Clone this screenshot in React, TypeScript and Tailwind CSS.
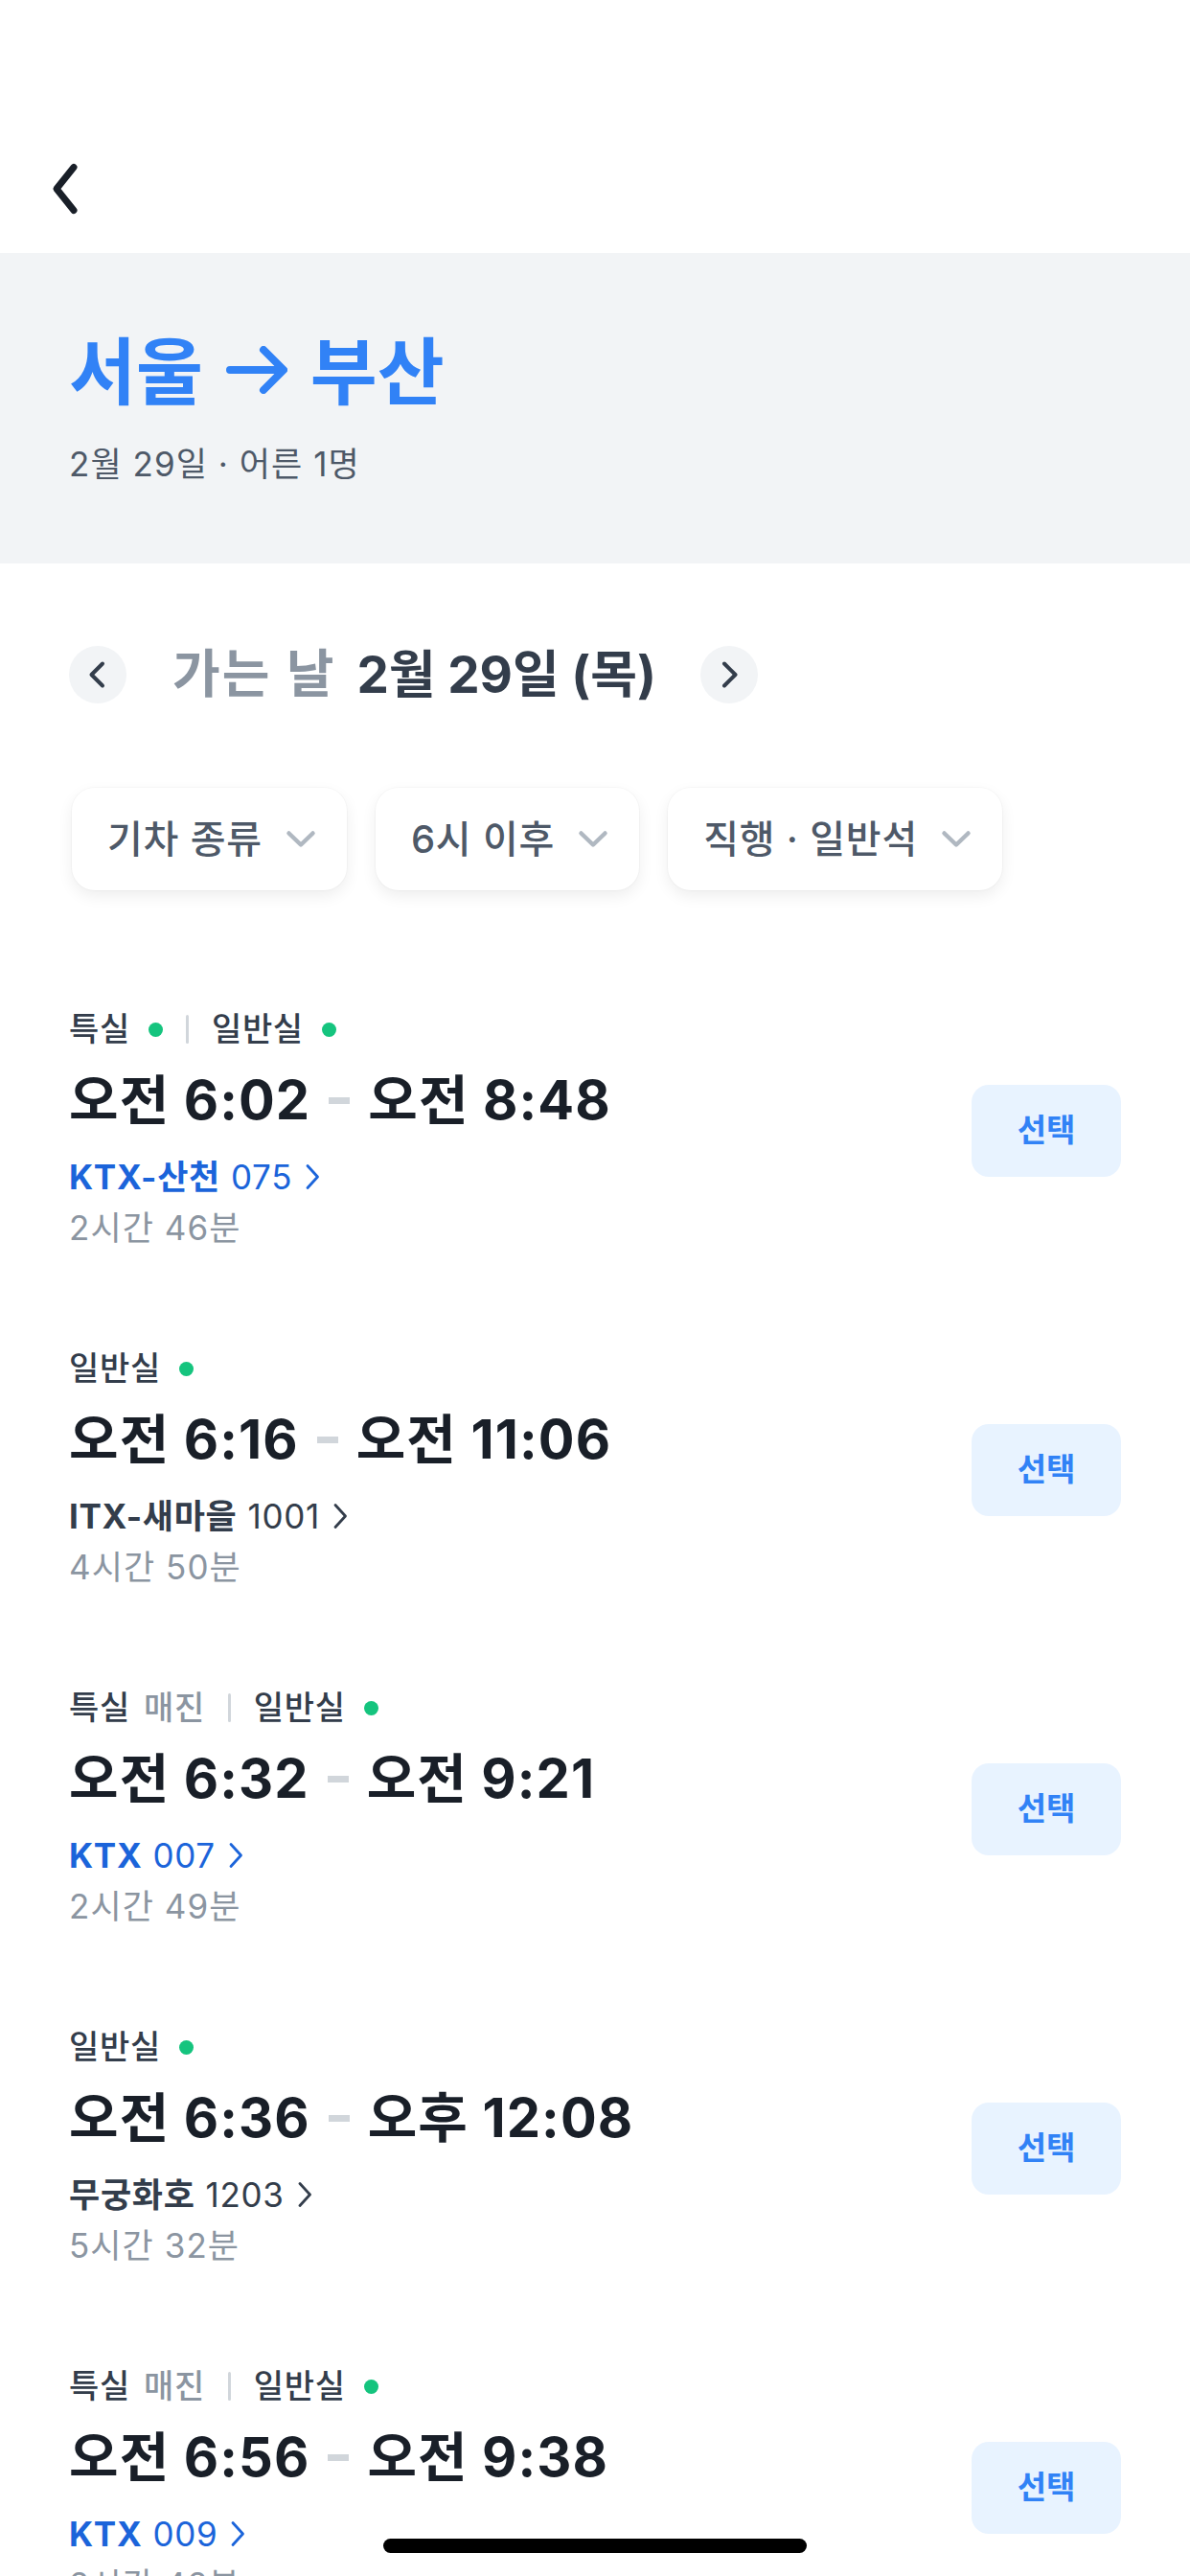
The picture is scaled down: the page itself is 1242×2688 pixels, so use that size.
import React from "react";

type Seat = { name: string; soldOut?: boolean };

type Train = {
  seats: Seat[];
  dep: string;
  arr: string;
  kind: string;
  no: string;
  ktx: boolean;
  duration: string;
};

const trains: Train[] = [
  { seats: [{ name: "특실" }, { name: "일반실" }], dep: "오전 6:02", arr: "오전 8:48", kind: "KTX-산천", no: "075", ktx: true, duration: "2시간 46분" },
  { seats: [{ name: "일반실" }], dep: "오전 6:16", arr: "오전 11:06", kind: "ITX-새마을", no: "1001", ktx: false, duration: "4시간 50분" },
  { seats: [{ name: "특실", soldOut: true }, { name: "일반실" }], dep: "오전 6:32", arr: "오전 9:21", kind: "KTX", no: "007", ktx: true, duration: "2시간 49분" },
  { seats: [{ name: "일반실" }], dep: "오전 6:36", arr: "오후 12:08", kind: "무궁화호", no: "1203", ktx: false, duration: "5시간 32분" },
  { seats: [{ name: "특실", soldOut: true }, { name: "일반실" }], dep: "오전 6:56", arr: "오전 9:38", kind: "KTX", no: "009", ktx: true, duration: "2시간 42분" },
];

const filters = ["기차 종류", "6시 이후", "직행 · 일반석"];

const ChipChevron = () => (
  <svg width="32" height="20" viewBox="0 0 32 20" fill="none">
    <path d="M3.5 3.5 L16 15.5 L28.5 3.5" stroke="#b0b8c1" strokeWidth="4.5" strokeLinecap="round" strokeLinejoin="round" />
  </svg>
);

const SmallChevron = ({ color }: { color: string }) => (
  <svg width="18" height="28" viewBox="0 0 18 28" fill="none">
    <path d="M4 2.5 L14.5 14 L4 25.5" stroke={color} strokeWidth="2.8" strokeLinecap="round" strokeLinejoin="round" />
  </svg>
);

const SeatLabels = ({ seats }: { seats: Seat[] }) => (
  <div className="flex items-center h-[44px] text-[34px] leading-[44px] tracking-[0.02em] text-[#333d4b] font-medium">
    {seats.map((seat, i) => (
      <React.Fragment key={seat.name}>
        {i > 0 && <span className="mx-[24px] w-[3px] h-[30px] bg-[#d1d6db] rounded-full" />}
        <span>{seat.name}</span>
        {seat.soldOut ? (
          <span className="ml-[14px] text-[#8b95a1]">매진</span>
        ) : (
          <span className="ml-[19px] w-[15px] h-[15px] rounded-full bg-[#15c47e]" />
        )}
      </React.Fragment>
    ))}
  </div>
);

const TrainRow = ({ train }: { train: Train }) => {
  const color = train.ktx ? "#1b64da" : "#333d4b";
  return (
    <div className="flex items-center justify-between">
      <div className="flex flex-col">
        <SeatLabels seats={train.seats} />
        <div className="mt-[16px] flex items-center h-[72px] text-[56px] leading-[72px] font-bold text-[#191f28] tracking-[0.02em]">
          <span>{train.dep}</span>
          <span className="mx-[19px] w-[22px] h-[7px] bg-[#d1d6db]" />
          <span>{train.arr}</span>
        </div>
        <div className={`mt-[18px] flex items-center h-[52px] text-[35px] leading-[52px] tracking-[0.02em] ${train.ktx ? "text-[#1b64da]" : "text-[#333d4b]"}`}>
          <span className="font-bold">{train.kind}</span>
          <span className="ml-[11px]">{train.no}</span>
          <span className="ml-[12px] flex items-center">
            <SmallChevron color={color} />
          </span>
        </div>
        <div className="h-[54px] text-[35px] leading-[54px] tracking-[0.03em] text-[#8b95a1]">{train.duration}</div>
      </div>
      <button className="w-[156px] h-[96px] rounded-[18px] bg-[#e8f3ff] text-[#3182f6] text-[33px] font-bold">
        선택
      </button>
    </div>
  );
};

export default function App() {
  return (
    <div className="relative w-[1242px] h-[2688px] overflow-hidden bg-white font-['Inter','Noto_Sans_CJK_KR',sans-serif]">
      {/* Top bar */}
      <div className="h-[264px] pl-[52px] pt-[168px]">
        <svg width="32" height="58" viewBox="0 0 32 58" fill="none">
          <path d="M25 6.5 L7 29 L25 51.5" stroke="#191f28" strokeWidth="7" strokeLinecap="round" strokeLinejoin="round" />
        </svg>
      </div>

      {/* Route summary */}
      <div className="bg-[#f2f4f6] px-[72px] pt-[82px] pb-[82px]">
        <h1 className="flex items-center h-[84px] text-[76px] leading-[84px] font-bold text-[#3182f6]">
          <span>서울</span>
          <svg className="mx-[24px] mb-[4px]" width="64" height="50" viewBox="0 0 64 50" fill="none">
            <path d="M4 25 H59 M39 4 L60 25 L39 46" stroke="#3182f6" strokeWidth="8" strokeLinecap="round" strokeLinejoin="round" />
          </svg>
          <span>부산</span>
        </h1>
        <p className="mt-[32px] h-[44px] text-[35px] leading-[44px] tracking-[0.03em] text-[#4e5968]">2월 29일 · 어른 1명</p>
      </div>

      {/* Date + filters */}
      <div className="px-[72px] pt-[86px]">
        <div className="flex items-center h-[60px]">
          <button className="w-[60px] h-[60px] rounded-full bg-[#f2f4f6] flex items-center justify-center">
            <svg width="60" height="60" viewBox="0 0 60 60" fill="none">
              <path d="M35 18.5 L23.5 30 L35 41.5" stroke="#333d4b" strokeWidth="4" strokeLinecap="round" strokeLinejoin="round" />
            </svg>
          </button>
          <span className="ml-[48px] text-[54px] leading-[60px] font-bold tracking-[0.04em] text-[#8b95a1]">가는 날</span>
          <span className="ml-[22px] text-[53px] leading-[60px] font-bold text-[#333d4b]">2월 29일 (목)</span>
          <button className="ml-[46px] w-[60px] h-[60px] rounded-full bg-[#f2f4f6] flex items-center justify-center">
            <svg width="60" height="60" viewBox="0 0 60 60" fill="none">
              <path d="M25 18.5 L36.5 30 L25 41.5" stroke="#333d4b" strokeWidth="4" strokeLinecap="round" strokeLinejoin="round" />
            </svg>
          </button>
        </div>

        <div className="mt-[88px] flex gap-[30px] pl-[3px]">
          {filters.map((f) => (
            <div
              key={f}
              className="flex items-center h-[107px] pl-[37px] pr-[32px] rounded-[24px] bg-white shadow-[0_0_0_1px_rgba(0,0,0,0.025),0_6px_16px_rgba(0,0,0,0.07)]"
            >
              <span className="text-[40px] leading-[48px] font-medium tracking-[0.02em] text-[#4e5968]">{f}</span>
              <span className="ml-[24px] flex items-center">
                <ChipChevron />
              </span>
            </div>
          ))}
        </div>
      </div>

      {/* Train list */}
      <div className="px-[72px] pt-[123px] flex flex-col gap-[98px]">
        {trains.map((t) => (
          <TrainRow key={t.dep} train={t} />
        ))}
      </div>

      {/* Home indicator */}
      <div className="absolute bottom-[24px] left-1/2 -translate-x-1/2 w-[442px] h-[15px] rounded-full bg-black" />
    </div>
  );
}
